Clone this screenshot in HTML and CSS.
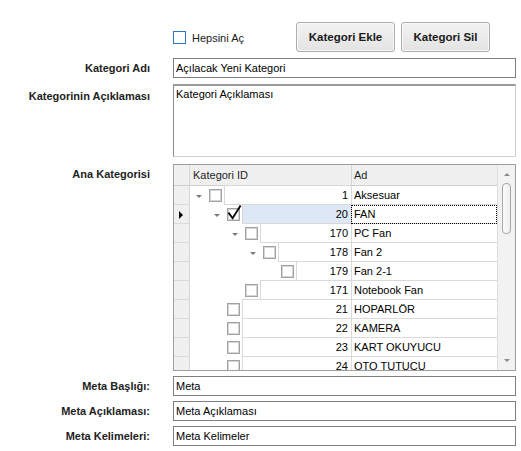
FILE: index.html
```html
<!DOCTYPE html>
<html lang="tr">
<head>
<meta charset="utf-8">
<title>Kategori</title>
<link rel="stylesheet" href="styles.css">
</head>
<body>
<div class="form">
  <div class="toolbar">
    <div class="chk-all"><span class="bluebox"></span><span>Hepsini Aç</span></div>
    <div class="btn ekle">Kategori Ekle</div>
    <div class="btn sil">Kategori Sil</div>
  </div>

  <div class="frow r-ad">
    <div class="lbl">Kategori Adı</div>
    <div class="field">Açılacak Yeni Kategori</div>
  </div>

  <div class="frow r-acik">
    <div class="lbl lbl-area">Kategorinin Açıklaması</div>
    <div class="area">Kategori Açıklaması</div>
  </div>

  <div class="frow r-tree">
    <div class="lbl">Ana Kategorisi</div>
    <div class="tree">
      <div class="grid">
        <div class="hrow">
          <div class="hind"></div>
          <div class="h1">Kategori ID</div>
          <div class="h2">Ad</div>
        </div>

        <div class="trow">
          <div class="ind"></div>
          <div class="c1 lv0"><span class="exp"><i class="tri"></i></span><span class="tcb"></span><span class="cell">1</span></div>
          <div class="c2">Aksesuar</div>
        </div>
        <div class="trow sel">
          <div class="ind"><i class="focus-tri"></i></div>
          <div class="c1 lv1"><span class="exp"><i class="tri"></i></span><span class="tcb checked"><svg class="check" width="13" height="13" viewBox="0 0 13 13"><path d="M1.5 4.6 L5.6 10.2 L13.6 -2.6" fill="none" stroke="#000" stroke-width="1.8"/></svg></span><span class="cell">20</span></div>
          <div class="c2 focus">FAN</div>
        </div>
        <div class="trow">
          <div class="ind"></div>
          <div class="c1 lv2"><span class="exp"><i class="tri"></i></span><span class="tcb"></span><span class="cell">170</span></div>
          <div class="c2">PC Fan</div>
        </div>
        <div class="trow">
          <div class="ind"></div>
          <div class="c1 lv3"><span class="exp"><i class="tri"></i></span><span class="tcb"></span><span class="cell">178</span></div>
          <div class="c2">Fan 2</div>
        </div>
        <div class="trow">
          <div class="ind"></div>
          <div class="c1 lv4"><span class="exp"></span><span class="tcb"></span><span class="cell">179</span></div>
          <div class="c2">Fan 2-1</div>
        </div>
        <div class="trow">
          <div class="ind"></div>
          <div class="c1 lv2"><span class="exp"></span><span class="tcb"></span><span class="cell">171</span></div>
          <div class="c2">Notebook Fan</div>
        </div>
        <div class="trow">
          <div class="ind"></div>
          <div class="c1 lv1"><span class="exp"></span><span class="tcb"></span><span class="cell">21</span></div>
          <div class="c2">HOPARLÖR</div>
        </div>
        <div class="trow">
          <div class="ind"></div>
          <div class="c1 lv1"><span class="exp"></span><span class="tcb"></span><span class="cell">22</span></div>
          <div class="c2">KAMERA</div>
        </div>
        <div class="trow">
          <div class="ind"></div>
          <div class="c1 lv1"><span class="exp"></span><span class="tcb"></span><span class="cell">23</span></div>
          <div class="c2">KART OKUYUCU</div>
        </div>
        <div class="trow">
          <div class="ind"></div>
          <div class="c1 lv1"><span class="exp"></span><span class="tcb"></span><span class="cell">24</span></div>
          <div class="c2">OTO TUTUCU</div>
        </div>
      </div>
      <div class="vscroll">
        <div class="sbtn"><i class="up"></i></div>
        <div class="track"><div class="thumb"></div></div>
        <div class="sbtn"><i class="down"></i></div>
      </div>
    </div>
  </div>

  <div class="frow r-meta1">
    <div class="lbl">Meta Başlığı:</div>
    <div class="field">Meta</div>
  </div>
  <div class="frow r-meta">
    <div class="lbl">Meta Açıklaması:</div>
    <div class="field">Meta Açıklaması</div>
  </div>
  <div class="frow r-meta">
    <div class="lbl">Meta Kelimeleri:</div>
    <div class="field">Meta Kelimeler</div>
  </div>
</div>
</body>
</html>
```

FILE: styles.css
```css
html, body {
  margin: 0;
  padding: 0;
  background: #ffffff;
}
body {
  font-family: "Liberation Sans", Arial, sans-serif;
  font-size: 11px;
  color: #000;
}
.form {
  padding-top: 22px;
  width: 516px;
}

/* toolbar */
.toolbar {
  display: flex;
  align-items: center;
  height: 30px;
  margin-left: 173px;
}
.chk-all {
  display: flex;
  align-items: center;
  width: 123px;
  margin-top: 1px;
  color: #1a1a1a;
}
.bluebox {
  width: 13px;
  height: 13px;
  box-sizing: border-box;
  border: 1px solid #2e74c4;
  background: #fff;
  margin-right: 6px;
  flex: none;
}
.btn {
  height: 30px;
  box-sizing: border-box;
  border: 1px solid #adadad;
  border-radius: 3px;
  background: linear-gradient(#f3f3f3, #e3e3e3);
  box-shadow: inset 0 0 0 1px #f8f8f8;
  display: flex;
  align-items: center;
  justify-content: center;
  font-weight: bold;
  font-size: 11.5px;
  color: #1a1a1a;
}
.btn.ekle { width: 99px; margin-right: 6px; }
.btn.sil { width: 89px; }

/* form rows */
.frow {
  display: flex;
  align-items: flex-start;
}
.lbl {
  width: 150px;
  padding-right: 23px;
  flex: none;
  text-align: right;
  font-weight: bold;
  line-height: 20px;
  color: #1e1e1e;
}
.lbl-area { padding-top: 2px; }
.r-ad { margin-top: 6px; }
.r-acik { margin-top: 6px; }
.r-tree { margin-top: 7px; }
.r-meta1 { margin-top: 5px; }
.r-meta { margin-top: 5px; }

.field {
  width: 343px;
  height: 20px;
  box-sizing: border-box;
  border: 1px solid #808080;
  padding: 0 2px;
  line-height: 18px;
  white-space: nowrap;
  overflow: hidden;
}
.area {
  width: 343px;
  height: 73px;
  box-sizing: border-box;
  border-top: 2px solid #9a9a9a;
  border-left: 1px solid #8a8a8a;
  border-right: 1px solid #cfcfcf;
  border-bottom: 1px solid #cfcfcf;
  padding: 2px 2px;
  line-height: 13px;
}

/* tree list */
.tree {
  width: 343px;
  height: 207px;
  box-sizing: border-box;
  border: 1px solid #9e9e9e;
  display: flex;
  overflow: hidden;
}
.grid {
  width: 323px;
  flex: none;
  overflow: hidden;
}
.hrow {
  display: flex;
  height: 21px;
  box-sizing: border-box;
  border-bottom: 1px solid #cfcfcf;
  background: repeating-conic-gradient(#ececec 0 25%, #f4f4f4 0 50%) 0 0 / 2px 2px;
  color: #1e1e1e;
  line-height: 20px;
}
.hind {
  width: 16px;
  box-sizing: border-box;
  border-right: 1px solid #d6d6d6;
  flex: none;
}
.h1 {
  width: 161px;
  box-sizing: border-box;
  padding-left: 3px;
  flex: none;
}
.h2 {
  flex: 1;
  border-left: 1px solid #d6d6d6;
  padding-left: 2px;
}

.trow {
  display: flex;
  height: 19px;
}
.ind {
  width: 16px;
  box-sizing: border-box;
  flex: none;
  border-right: 1px solid #d6d6d6;
  border-bottom: 1px solid #d9d9d9;
  background: repeating-conic-gradient(#ececec 0 25%, #f4f4f4 0 50%) 0 0 / 2px 2px;
  display: flex;
  align-items: center;
  padding-left: 5px;
}
.focus-tri {
  display: block;
  width: 0;
  height: 0;
  border-top: 4px solid transparent;
  border-bottom: 4px solid transparent;
  border-left: 4px solid #000;
  margin-top: 1px;
}
.c1 {
  width: 161px;
  flex: none;
  display: flex;
  box-sizing: border-box;
}
.lv0 { padding-left: 0; }
.lv1 { padding-left: 18px; }
.lv2 { padding-left: 36px; }
.lv3 { padding-left: 54px; }
.lv4 { padding-left: 72px; }

.exp {
  width: 19px;
  flex: none;
  display: flex;
  align-items: center;
  padding-left: 6px;
  box-sizing: border-box;
}
.tri {
  display: block;
  width: 0;
  height: 0;
  border-left: 3px solid transparent;
  border-right: 3px solid transparent;
  border-top: 3px solid #7c7c7c;
  margin-top: 2px;
}
.tcb {
  width: 13px;
  height: 13px;
  box-sizing: border-box;
  flex: none;
  align-self: center;
  margin-right: 2px;
  border: 1px solid #a2a2a2;
  box-shadow: inset 0 0 0 1px #d6d6d6;
  background: #fff;
  margin-top: -1px;
}
.check {
  display: block;
  overflow: visible;
  margin: -1px 0 0 -1px;
}
.cell {
  flex: 1;
  box-sizing: border-box;
  border-left: 1px solid #d9d9d9;
  border-bottom: 1px solid #d9d9d9;
  box-shadow: 0 -1px 0 #d9d9d9;
  text-align: right;
  padding-right: 3px;
  line-height: 18px;
}
.sel .cell {
  background: #dde7f5;
}
.c2 {
  flex: 1;
  box-sizing: border-box;
  border-left: 1px solid #d9d9d9;
  border-bottom: 1px solid #d9d9d9;
  padding-left: 2px;
  line-height: 18px;
  white-space: nowrap;
}
.c2.focus {
  outline: 1px dotted #000;
  outline-offset: -1px;
}

/* scrollbar */
.vscroll {
  flex: 1;
  border-left: 1px solid #dcdcdc;
  display: flex;
  flex-direction: column;
  background: repeating-conic-gradient(#eeeeee 0 25%, #f6f6f6 0 50%) 0 0 / 2px 2px;
}
.sbtn {
  height: 17px;
  flex: none;
  display: flex;
  align-items: center;
  justify-content: center;
}
.up {
  display: block;
  width: 0;
  height: 0;
  border-left: 3px solid transparent;
  border-right: 3px solid transparent;
  border-bottom: 3px solid #8a8a8a;
  margin-top: 2px;
}
.down {
  display: block;
  width: 0;
  height: 0;
  border-left: 3px solid transparent;
  border-right: 3px solid transparent;
  border-top: 3px solid #8a8a8a;
  margin-top: -3px;
}
.track {
  flex: 1;
  display: flex;
  justify-content: center;
  padding-top: 1px;
}
.thumb {
  width: 9px;
  height: 51px;
  box-sizing: border-box;
  border: 1px solid #a9a9a9;
  border-radius: 4px;
  background: linear-gradient(90deg, #fbfbfb, #ededed);
}
```
